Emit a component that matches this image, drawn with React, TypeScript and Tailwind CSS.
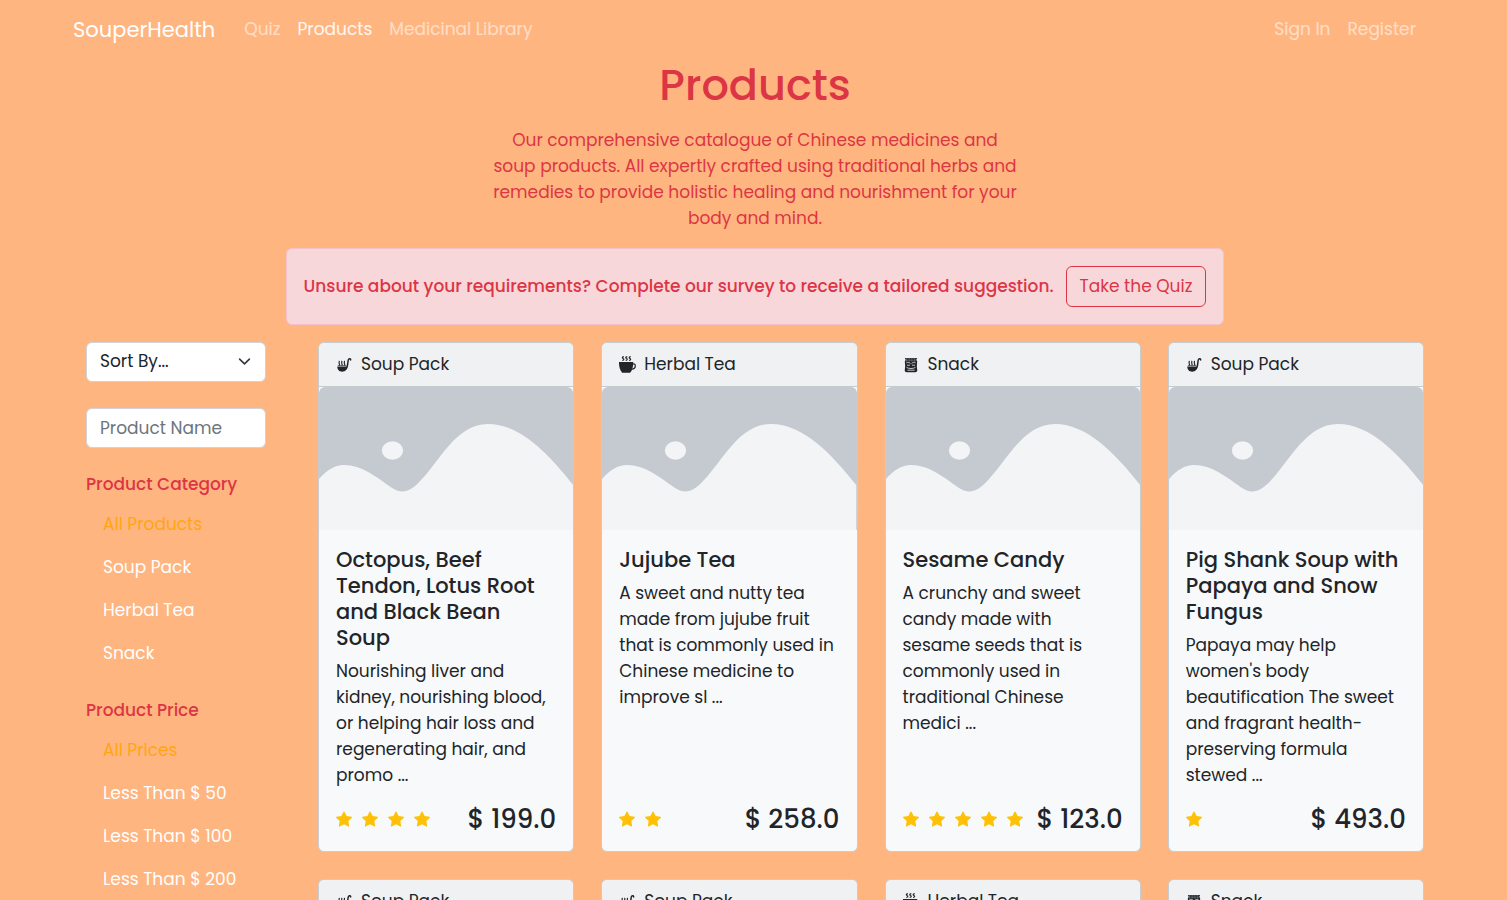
import React from "react";
import { BsStarFill } from "react-icons/bs";

type Category = "Soup Pack" | "Herbal Tea" | "Snack";

interface Product {
  category: Category;
  name: string;
  description: string;
  rating: number;
  price: string;
}

const products: Product[] = [
  {
    category: "Soup Pack",
    name: "Octopus, Beef Tendon, Lotus Root and Black Bean Soup",
    description:
      "Nourishing liver and kidney, nourishing blood, or helping hair loss and regenerating hair, and promo ...",
    rating: 4,
    price: "199.0",
  },
  {
    category: "Herbal Tea",
    name: "Jujube Tea",
    description:
      "A sweet and nutty tea made from jujube fruit that is commonly used in Chinese medicine to improve sl ...",
    rating: 2,
    price: "258.0",
  },
  {
    category: "Snack",
    name: "Sesame Candy",
    description:
      "A crunchy and sweet candy made with sesame seeds that is commonly used in traditional Chinese medici ...",
    rating: 5,
    price: "123.0",
  },
  {
    category: "Soup Pack",
    name: "Pig Shank Soup with Papaya and Snow Fungus",
    description:
      "Papaya may help women's body beautification The sweet and fragrant health-preserving formula stewed ...",
    rating: 1,
    price: "493.0",
  },
];

const nextRow: Category[] = ["Soup Pack", "Soup Pack", "Herbal Tea", "Snack"];

function LadleIcon() {
  return (
    <svg viewBox="0 0 17 17" className="size-[17px]" fill="none" aria-hidden="true">
      <path d="M1.3 10.6h9.800c0 3.200-1.900 5.200-4.900 5.200s-4.900-2-4.900-5.200z" fill="currentColor" />
      <path d="M10.200 12.600c2.200-2.200 1.200-8 2.400-9.400.8-.8 1.900-.5 2.100.7" stroke="currentColor" strokeWidth="1.5" strokeLinecap="round" />
      <path d="M2.800 5c1.500.8-.4 1.500.4 2.400.5.500.4 1.400 0 2.200M5.400 5c1.500.8-.4 1.500.4 2.400.5.500.4 1.400 0 2.200M8 5c1.500.8-.4 1.500.4 2.400.5.500.4 1.400 0 2.200" stroke="currentColor" strokeWidth="1.2" />
      <path d="M1.800 9.500h8.400" stroke="currentColor" strokeWidth=".6" />
    </svg>
  );
}

function TeaIcon() {
  return (
    <svg viewBox="0 0 17 17" className="size-[17px]" fill="none" aria-hidden="true">
      <path d="M0 6h14.2c.1 4.400-.7 7.600-2.600 10.200-.5.500-.9.600-1.500.600H4.200c-.6 0-1-.1-1.500-.600C.8 13.600-.1 10.400 0 6z" fill="currentColor" />
      <path d="M13.800 8c1.700-.4 2.600.4 2.500 1.900-.1 1.900-1.500 3.200-3.400 3.200" stroke="currentColor" strokeWidth="1.200" />
      <path d="M4.900.600c-2 .3-1.800 1.300-.8 1.900 1.100.6 1.100 1.600-.8 2M8.300.600c-2 .3-1.800 1.300-.8 1.900 1.100.6 1.100 1.600-.8 2M11.700.600c-2 .3-1.800 1.300-.8 1.900 1.100.6 1.100 1.600-.8 2" stroke="currentColor" strokeWidth="1.200" />
    </svg>
  );
}

function SnackIcon() {
  return (
    <svg viewBox="0 0 17 17" className="size-[17px]" fill="none" aria-hidden="true">
      <path d="M1.800 2h12.400l-.9 1.700.9 1.800-.4 4.700.5 4.300c-.2 1.100-.9 1.700-2 1.700H3.700c-1.100 0-1.800-.6-2-1.700l.5-4.300-.4-4.700.9-1.800z" fill="currentColor" />
      <path d="M3 3h10M3 4.800h10" stroke="#eff1f2" strokeWidth=".5" strokeDasharray="1 .6" />
      <path d="M3.400 6.800c1.300-.7 3-.4 4.100.8M8.500 7.600c1.100-1.200 2.800-1.500 4.100-.8M4 9.200h3M9 9.200h3M3.600 11.400c2.300 1.500 6.500 1.500 8.800 0M4.400 14.200h7.200" stroke="#eff1f2" strokeWidth=".8" />
    </svg>
  );
}

function CategoryHeader({ category }: { category: Category }) {
  return (
    <header className="flex items-center gap-2 rounded-t-md border-b border-[#c5cacd] bg-[#eff1f2] px-[17px] py-2">
      {category === "Soup Pack" && <LadleIcon />}
      {category === "Herbal Tea" && <TeaIcon />}
      {category === "Snack" && <SnackIcon />}
      <span className="leading-[27px]">{category}</span>
    </header>
  );
}

function Placeholder() {
  return (
    <svg viewBox="0 0 256 143" preserveAspectRatio="none" className="h-[143px] w-full rounded-t-md bg-[#c4cad0]" role="img" aria-label="Product">
      <path d="M0 92C8 83 16 78 25 78C43 78 58 90 72 100C84 108 91 104 99 97C121 76 137 37 170 37C203 37 231 67 256 98V143H0Z" fill="#f2f4f5" />
      <ellipse cx="74" cy="63.5" rx="10.7" ry="9.2" fill="#f2f4f5" />
    </svg>
  );
}

function ProductCard({ product }: { product: Product }) {
  return (
    <article className="flex flex-col rounded-md border border-[#c5cdd2] bg-[#f8f9fa]">
      <CategoryHeader category={product.category} />
      <Placeholder />
      <div className="flex grow flex-col p-[17px]">
        <h2 className="mb-[7px] text-[21px] leading-[26px] font-medium">{product.name}</h2>
        <p className="mb-auto leading-[26px]">{product.description}</p>
        <div className="mt-4 flex items-center justify-between">
          <span className="flex gap-[10px] text-[#ffc107]" role="img" aria-label={`${product.rating} stars`}>
            {Array.from({ length: product.rating }, (_, i) => (
              <BsStarFill key={i} className="size-4" />
            ))}
          </span>
          <span className="text-[26px] leading-[30px] font-medium">$ {product.price}</span>
        </div>
      </div>
    </article>
  );
}

function FilterGroup({ title, items, className }: { title: string; items: string[]; className: string }) {
  return (
    <section className={className}>
      <h2 className="leading-[26px] font-medium text-[#dc3545]">{title}</h2>
      <ul className="mt-[6px]">
        {items.map((item, i) => (
          <li key={item}>
            <a href="#" className={`block px-[17px] py-2 leading-[27px] ${i === 0 ? "text-[#ffa514]" : "text-white"}`}>
              {item}
            </a>
          </li>
        ))}
      </ul>
    </section>
  );
}

export default function App() {
  return (
    <div className="min-h-screen bg-[#ffb580] font-['Poppins','Inter',sans-serif] text-[17px] text-[#212529]">
      <nav className="flex items-start px-[73px] pt-[13px]">
        <a href="#" className="mr-[29px] text-[21px] leading-[34px] text-white">SouperHealth</a>
        <div className="flex grow gap-[17px] leading-8 text-white/55">
          <a href="#">Quiz</a>
          <a href="#" className="text-white/90">Products</a>
          <a href="#">Medicinal Library</a>
        </div>
        <div className="mr-[18px] flex gap-[17px] leading-8 text-white/55">
          <a href="#">Sign In</a>
          <a href="#">Register</a>
        </div>
      </nav>

      <header className="flex flex-col items-center pt-3 pl-[3px] text-center text-[#dc3545]">
        <h1 className="text-[43px] leading-[52px] font-medium">Products</h1>
        <p className="mt-4 w-[530px] leading-[26px]">
          Our comprehensive catalogue of Chinese medicines and soup products. All expertly crafted using
          traditional herbs and remedies to provide holistic healing and nourishment for your body and mind.
        </p>
        <div className="mt-[17px] flex items-center gap-3 rounded-md border border-[#f5c2cb] bg-[#f8d7da] p-[17px]">
          <strong className="font-medium">
            Unsure about your requirements? Complete our survey to receive a tailored suggestion.
          </strong>
          <button type="button" className="rounded-md border border-[#dc3545] px-[13px] py-[6px] leading-[27px]">
            Take the Quiz
          </button>
        </div>
      </header>

      <main className="flex gap-[52px] pt-[17px] pr-[83px] pb-7 pl-[86px]">
        <aside className="w-[180px] shrink-0">
          <div className="relative">
            <select aria-label="Sort By" className="h-10 w-full appearance-none rounded-md border border-[#ced4da] bg-white px-[13px]">
              <option>Sort By...</option>
            </select>
            <svg viewBox="0 0 16 16" className="pointer-events-none absolute top-[13px] right-[15px] size-[13px]" fill="none" stroke="#343a40" strokeWidth="2" strokeLinecap="round" strokeLinejoin="round" aria-hidden="true">
              <path d="m2 5 6 6 6-6" />
            </svg>
          </div>
          <input aria-label="Product Name" placeholder="Product Name" className="mt-[26px] block h-10 w-full rounded-md border border-[#ced4da] bg-white px-[13px] placeholder:text-[#6c757d]" />
          <FilterGroup className="mt-[23px]" title="Product Category" items={["All Products", "Soup Pack", "Herbal Tea", "Snack"]} />
          <FilterGroup className="mt-[22px]" title="Product Price" items={["All Prices", "Less Than $ 50", "Less Than $ 100", "Less Than $ 200"]} />
        </aside>
        <div className="grid min-w-0 grow grid-cols-4 gap-[27px]">
          {products.map((product) => (
            <ProductCard key={product.name} product={product} />
          ))}
          {nextRow.map((category, i) => (
            <article key={i} className="rounded-md border border-[#c5cdd2] bg-[#f8f9fa]">
              <CategoryHeader category={category} />
              <Placeholder />
            </article>
          ))}
        </div>
      </main>
    </div>
  );
}
